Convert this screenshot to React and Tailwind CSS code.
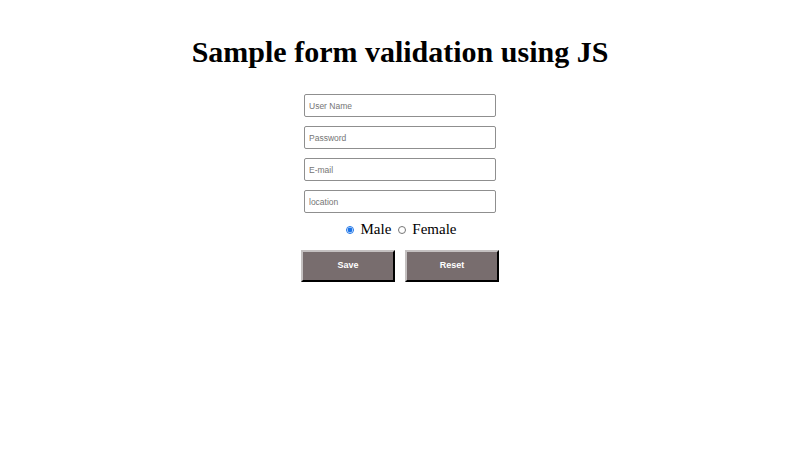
export default function App() {
  return (
    <div className="min-h-[450px] bg-white flex flex-col items-center" style={{ fontFamily: '"Liberation Serif", serif' }}>
      <h1 className="mt-[35px] text-[30px] leading-[34px] font-bold text-black">Sample form validation using JS</h1>
      <form className="mt-[25px] flex flex-col items-center" onSubmit={(e) => e.preventDefault()}>
        <div className="flex flex-col gap-[9px]">
          {['User Name', 'Password', 'E-mail', 'location'].map((p) => (
            <input
              key={p}
              type={p === 'Password' ? 'password' : 'text'}
              placeholder={p}
              className="w-[192px] h-[23px] border border-[#8f8f8f] rounded-[2px] px-[4px] text-[8.5px] text-black placeholder:text-[#757575] outline-none"
              style={{ fontFamily: '"Liberation Sans", Arial, sans-serif' }}
            />
          ))}
        </div>
        <div className="mt-[8px] flex items-center text-[15px] leading-[17px] text-black">
          <input type="radio" name="gender" defaultChecked className="w-[8px] h-[8px] m-0 accent-[#1a73e8] mr-[7px] ml-[2px]" />
          <span>Male</span>
          <input type="radio" name="gender" className="w-[8px] h-[8px] m-0 ml-[7px] mr-[6px]" />
          <span>Female</span>
        </div>
        <div className="mt-[12px] flex gap-[10px]">
          {['Save', 'Reset'].map((b) => (
            <button
              key={b}
              type="button"
              className="w-[94px] h-[32px] bg-[#786d6e] text-white text-[9px] font-bold border-2 border-t-[#c4c0c0] border-l-[#c4c0c0] border-b-black border-r-black"
              style={{ fontFamily: '"Liberation Sans", Arial, sans-serif' }}
            >
              {b}
            </button>
          ))}
        </div>
      </form>
    </div>
  );
}
